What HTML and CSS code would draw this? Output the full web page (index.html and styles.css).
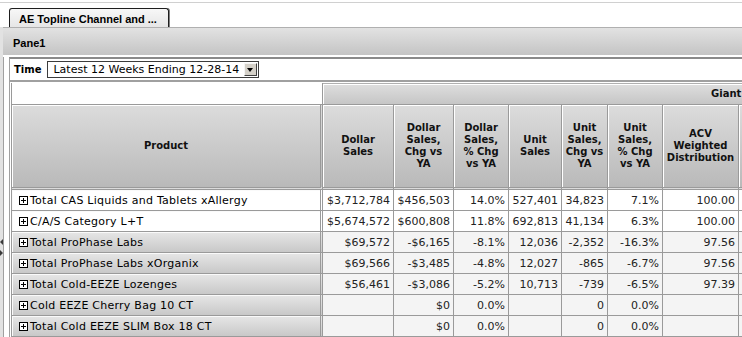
FILE: index.html
```html
<!DOCTYPE html>
<html lang="en">
<head>
    <meta charset="UTF-8">
    <meta name="viewport" content="width=device-width, initial-scale=1.0">
    <title>AE Topline Channel and ...</title>
    <link rel="stylesheet" href="styles.css">
</head>
<body>
    <div class="topline"></div>
    <div class="tabs">
        <div class="tab">AE Topline Channel and ...</div>
    </div>

    <div class="pane">
        <div class="pane-title">Pane1</div>
        <div class="pane-body">
            <div class="filter">
                <span class="filter-label">Time</span>
                <div class="select">
                    <span>Latest 12 Weeks Ending 12-28-14</span>
                    <span class="select-btn"></span>
                </div>
            </div>

            <div class="grid-wrap">
                <table class="grid">
                    <colgroup>
                        <col class="c-prod">
                        <col class="c-dol">
                        <col class="c-dchg">
                        <col class="c-dpct">
                        <col class="c-unit">
                        <col class="c-uchg">
                        <col class="c-upct">
                        <col class="c-acv">
                        <col class="c-more">
                    </colgroup>
                    <thead>
                        <tr>
                            <th class="corner"></th>
                            <th class="group" colspan="8">Giant</th>
                        </tr>
                        <tr class="colhead">
                            <th class="prod-head">Product</th>
                            <th>Dollar<br>Sales</th>
                            <th>Dollar<br>Sales,<br>Chg vs<br>YA</th>
                            <th>Dollar<br>Sales,<br>% Chg<br>vs YA</th>
                            <th>Unit<br>Sales</th>
                            <th>Unit<br>Sales,<br>Chg vs<br>YA</th>
                            <th>Unit<br>Sales,<br>% Chg<br>vs YA</th>
                            <th>ACV<br>Weighted<br>Distribution</th>
                            <th></th>
                        </tr>
                    </thead>
                    <tbody>
                        <tr class="hi">
                            <td class="prod"><span class="plus"></span>Total CAS Liquids and Tablets xAllergy</td>
                            <td>$3,712,784</td><td>$456,503</td><td>14.0%</td><td>527,401</td><td>34,823</td><td>7.1%</td><td>100.00</td><td></td>
                        </tr>
                        <tr class="hi">
                            <td class="prod"><span class="plus"></span>C/A/S Category L+T</td>
                            <td>$5,674,572</td><td>$600,808</td><td>11.8%</td><td>692,813</td><td>41,134</td><td>6.3%</td><td>100.00</td><td></td>
                        </tr>
                        <tr>
                            <td class="prod"><span class="plus"></span>Total ProPhase Labs</td>
                            <td>$69,572</td><td>-$6,165</td><td>-8.1%</td><td>12,036</td><td>-2,352</td><td>-16.3%</td><td>97.56</td><td></td>
                        </tr>
                        <tr>
                            <td class="prod"><span class="plus"></span>Total ProPhase Labs xOrganix</td>
                            <td>$69,566</td><td>-$3,485</td><td>-4.8%</td><td>12,027</td><td>-865</td><td>-6.7%</td><td>97.56</td><td></td>
                        </tr>
                        <tr>
                            <td class="prod"><span class="plus"></span>Total Cold-EEZE Lozenges</td>
                            <td>$56,461</td><td>-$3,086</td><td>-5.2%</td><td>10,713</td><td>-739</td><td>-6.5%</td><td>97.39</td><td></td>
                        </tr>
                        <tr>
                            <td class="prod"><span class="plus"></span>Cold EEZE Cherry Bag 10 CT</td>
                            <td></td><td>$0</td><td>0.0%</td><td></td><td>0</td><td>0.0%</td><td></td><td></td>
                        </tr>
                        <tr>
                            <td class="prod"><span class="plus"></span>Total Cold EEZE SLIM Box 18 CT</td>
                            <td></td><td>$0</td><td>0.0%</td><td></td><td>0</td><td>0.0%</td><td></td><td></td>
                        </tr>
                    </tbody>
                </table>
            </div>
        </div>
    </div>

    <svg class="splitter" width="4" height="18" viewBox="0 0 4 18">
        <polygon points="3,0 0,3 3,6" fill="#3a3a3a"/>
        <polygon points="0,11 3,14 0,17" fill="#3a3a3a"/>
    </svg>
</body>
</html>
```

FILE: styles.css
```css
* {
    box-sizing: border-box;
}
html, body {
    margin: 0;
    height: 100%;
    overflow: hidden;
}
body {
    position: relative;
    background: #fff;
    font-family: "DejaVu Sans", Verdana, sans-serif;
    font-size: 11px;
    color: #000;
}

.topline {
    height: 3px;
    border-bottom: 1px solid #d0d0d0;
}
.tabs {
    height: 24px;
    padding: 5px 0 0 9px;
}
.tab {
    width: 160px;
    height: 19px;
    padding: 1px 0 0 9px;
    border: 1px solid #1e1e1e;
    border-bottom: none;
    border-radius: 3px 3px 0 0;
    background: linear-gradient(#f7f7f7, #e6e6e6);
    box-shadow: 1px 0 0 #808080;
    font: bold 11px/18px "Liberation Sans", Arial, sans-serif;
    white-space: nowrap;
}

.pane {
    border-left: 3px solid #e2e2e2;
}
.pane-title {
    height: 30px;
    padding: 9px 0 0 10px;
    border-top: 1px solid #b0b0b0;
    border-bottom: 2px solid #fff;
    background: linear-gradient(#e2e2e2, #c4c4c4);
    font: bold 11px/13px "Liberation Sans", Arial, sans-serif;
}
.pane-body {
    border-left: 1px solid #a0a0a0;
    padding-left: 5px;
}

.filter {
    display: flex;
    align-items: center;
    height: 25px;
    padding-left: 4px;
    border-top: 2px solid #8a8a8a;
    border-bottom: 2px solid #a0a0a0;
    border-left: 1px solid #a0a0a0;
}
.filter-label {
    font-size: 10px;
    font-weight: bold;
    margin-right: 6px;
}
.select {
    display: flex;
    align-items: center;
    justify-content: space-between;
    width: 212px;
    height: 17px;
    padding-left: 5px;
    border: 1px solid #3c3c3c;
    background: #fff;
    white-space: nowrap;
}
.select-btn {
    position: relative;
    width: 13px;
    height: 13px;
    margin-right: 1px;
    background: #d4d0c8;
    border: 1px solid;
    border-color: #f4f4f4 #404040 #404040 #f4f4f4;
}
.select-btn::after {
    content: "";
    position: absolute;
    left: 2px;
    top: 4px;
    border: 3.5px solid transparent;
    border-top: 4px solid #000;
    border-bottom: none;
}

.grid-wrap {
    padding: 1px 0 0 1px;
    border-left: 1px solid #a0a0a0;
    overflow: hidden;
}
.grid {
    width: 818px;
    table-layout: fixed;
    border-collapse: separate;
    border-spacing: 0;
    border-left: 1px solid #9a9a9a;
}
.c-prod { width: 311px; }
.c-dol { width: 71px; }
.c-dchg { width: 60px; }
.c-dpct { width: 55px; }
.c-unit { width: 53px; }
.c-uchg { width: 46px; }
.c-upct { width: 55px; }
.c-acv { width: 76px; }
.c-more { width: 90px; }

.grid th, .grid td {
    padding: 0;
    border-right: 1px solid #9a9a9a;
    border-bottom: 1px solid #9a9a9a;
    overflow: hidden;
    white-space: nowrap;
}
.grid th {
    font-size: 10px;
    line-height: 12px;
    font-weight: bold;
    color: #111;
    background: linear-gradient(#dcdcdc, #b9b9b9);
    box-shadow: inset 1px 1px 0 #fff;
    vertical-align: middle;
}
.grid th.corner {
    height: 22px;
    background: #fff;
    box-shadow: none;
}
.grid th.group {
    height: 22px;
    border-top: 1px solid #b0b0b0;
    padding-left: 388px;
    text-align: left;
    background: linear-gradient(#dedede, #c6c6c6);
}
.colhead th {
    height: 85px;
    border-bottom: 3px double #9a9a9a;
}
.colhead th.prod-head {
    border-right: 3px double #9a9a9a;
}

.grid td {
    height: 21px;
    padding-right: 3px;
    text-align: right;
    color: #222;
    background: #f4f4f4;
}
.grid tr.hi td {
    background: #fff;
}
.grid td.prod {
    padding: 0 0 0 7px;
    text-align: left;
    color: #000;
    letter-spacing: 0.25px;
    border-right: 3px double #9a9a9a;
    background: linear-gradient(#e6e6e6, #c8c8c8);
    box-shadow: inset 1px 1px 0 #fafafa;
}
.plus {
    display: inline-block;
    position: relative;
    width: 9px;
    height: 9px;
    margin-right: 2px;
    vertical-align: -1px;
    border: 1px solid #000;
    background: #fff;
}
.plus::before, .plus::after {
    content: "";
    position: absolute;
    background: #000;
}
.plus::before {
    left: 1px;
    top: 3px;
    width: 5px;
    height: 1px;
}
.plus::after {
    left: 3px;
    top: 1px;
    width: 1px;
    height: 5px;
}

.splitter {
    position: absolute;
    left: 0;
    top: 239px;
}
```
